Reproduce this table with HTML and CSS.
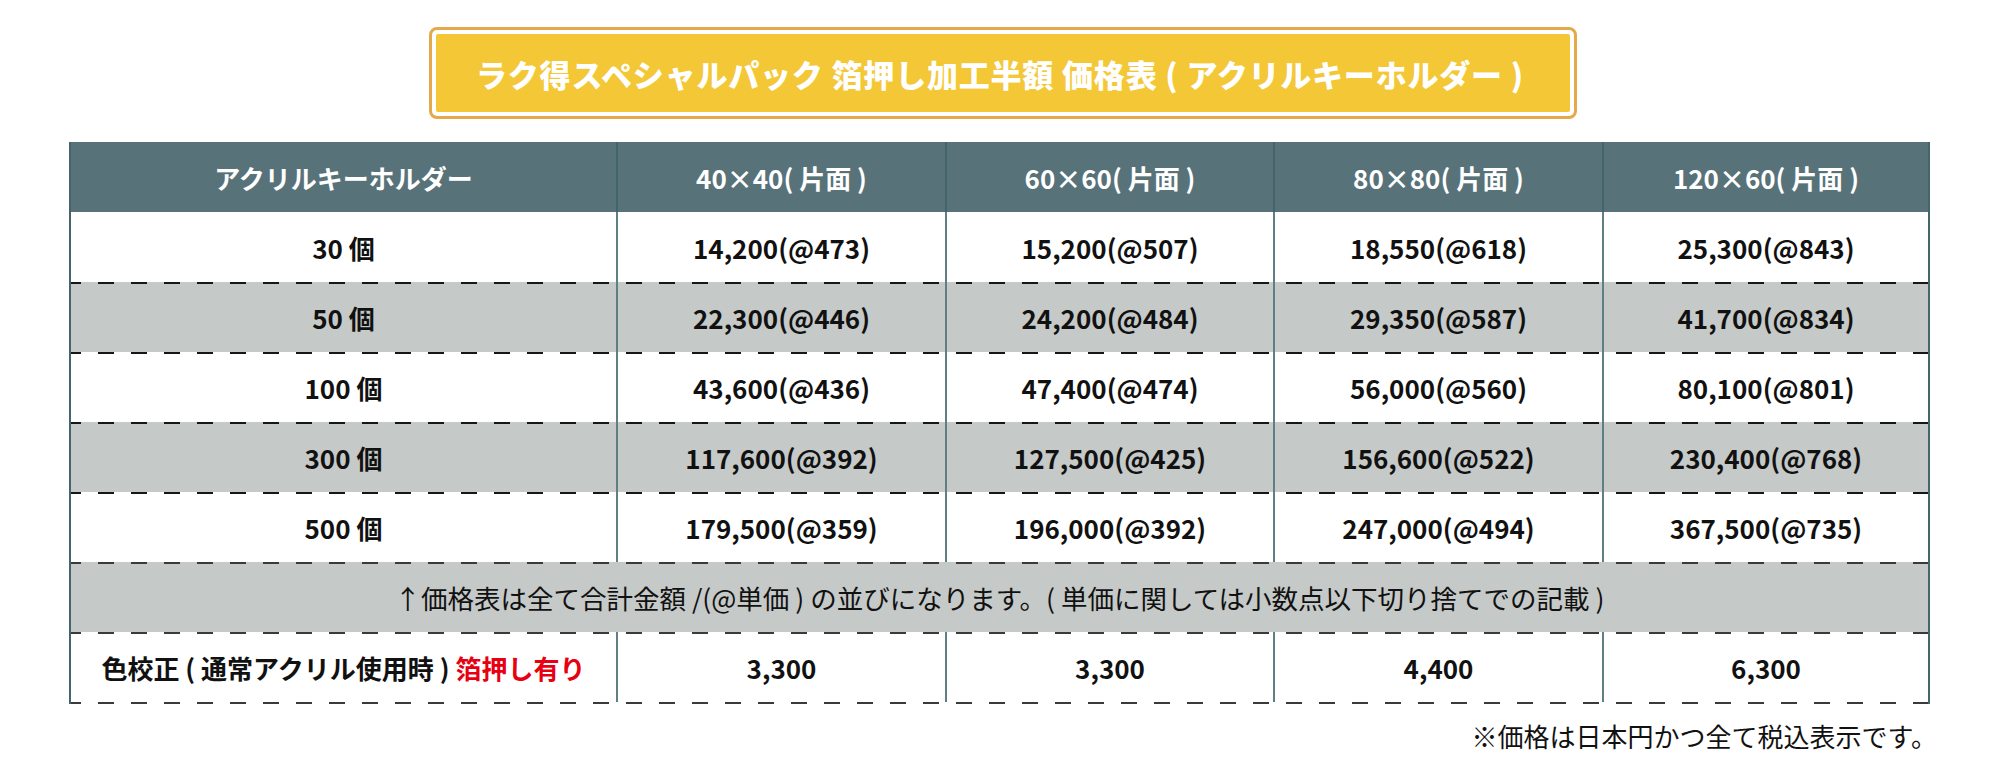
FILE: index.html
```html
<!DOCTYPE html>
<html lang="ja">
<head>
<meta charset="utf-8">
<title>ラク得スペシャルパック 価格表</title>
<link rel="stylesheet" href="styles.css">
</head>
<body>
<div class="page">
  <div class="title">
    <div class="title-inner">ラク得スペシャルパック 箔押し加工半額 価格表 ( アクリルキーホルダー )</div>
  </div>
  <div class="table">
    <div class="row head">
      <div class="cell">アクリルキーホルダー</div>
      <div class="cell">40×40( 片面 )</div>
      <div class="cell">60×60( 片面 )</div>
      <div class="cell">80×80( 片面 )</div>
      <div class="cell">120×60( 片面 )</div>
    </div>
    <div class="row">
      <div class="cell">30 個</div>
      <div class="cell">14,200(@473)</div>
      <div class="cell">15,200(@507)</div>
      <div class="cell">18,550(@618)</div>
      <div class="cell">25,300(@843)</div>
    </div>
    <div class="row gray dash">
      <div class="cell">50 個</div>
      <div class="cell">22,300(@446)</div>
      <div class="cell">24,200(@484)</div>
      <div class="cell">29,350(@587)</div>
      <div class="cell">41,700(@834)</div>
    </div>
    <div class="row dash">
      <div class="cell">100 個</div>
      <div class="cell">43,600(@436)</div>
      <div class="cell">47,400(@474)</div>
      <div class="cell">56,000(@560)</div>
      <div class="cell">80,100(@801)</div>
    </div>
    <div class="row gray dash">
      <div class="cell">300 個</div>
      <div class="cell">117,600(@392)</div>
      <div class="cell">127,500(@425)</div>
      <div class="cell">156,600(@522)</div>
      <div class="cell">230,400(@768)</div>
    </div>
    <div class="row dash">
      <div class="cell">500 個</div>
      <div class="cell">179,500(@359)</div>
      <div class="cell">196,000(@392)</div>
      <div class="cell">247,000(@494)</div>
      <div class="cell">367,500(@735)</div>
    </div>
    <div class="row gray dash dark note">
      <div class="cell">↑価格表は全て合計金額 /(@単価 ) の並びになります。( 単価に関しては小数点以下切り捨てでの記載 )</div>
    </div>
    <div class="row dash dark last">
      <div class="cell">色校正 ( 通常アクリル使用時 ) <span class="red">箔押し有り</span></div>
      <div class="cell">3,300</div>
      <div class="cell">3,300</div>
      <div class="cell">4,400</div>
      <div class="cell">6,300</div>
    </div>
  </div>
  <p class="footnote">※価格は日本円かつ全て税込表示です。</p>
</div>
</body>
</html>
```

FILE: styles.css
```css
body {
  margin: 0;
  background: #ffffff;
  font-family: "Noto Sans CJK JP", "Noto Sans", sans-serif;
  color: #111111;
}

.page {
  width: 2000px;
  padding-top: 27px;
}

.title {
  margin-left: 429px;
  width: 1148px;
  height: 92px;
  box-sizing: border-box;
  border: 3px solid #e5a84a;
  border-radius: 8px;
  padding: 4px;
  background: #ffffff;
}

.title-inner {
  height: 100%;
  background: #f4c736;
  border-radius: 2px;
  display: flex;
  align-items: center;
  justify-content: center;
  color: #ffffff;
  font-weight: 900;
  font-size: 31px;
  letter-spacing: 0.8px;
  padding-right: 6px;
  box-sizing: border-box;
}

.table {
  margin: 23px 0 0 69px;
  width: 1861px;
  box-sizing: border-box;
  border-left: 2px solid #44656b;
  border-right: 2px solid #44656b;
}

.row {
  display: grid;
  grid-template-columns: 545px 329px 328px 329px 326px;
  height: 70px;
  font-weight: 700;
  font-size: 26px;
}

.cell {
  display: flex;
  align-items: center;
  justify-content: center;
  box-sizing: border-box;
  white-space: nowrap;
}

.cell + .cell {
  border-left: 2px solid #5f7f85;
}

.head {
  background: #587279;
  color: #ffffff;
}

.head .cell + .cell {
  border-left-color: #42646a;
}

.gray {
  background-color: #c5c9c8;
}

.dash {
  background-image: repeating-linear-gradient(to right, #161616 0 10px, transparent 10px 27px, #161616 27px 33px);
  background-size: 100% 2px;
  background-repeat: no-repeat;
  background-position: 0 0;
}

.dark {
  background-image: repeating-linear-gradient(to right, #3a3a3a 0 10px, transparent 10px 27px, #3a3a3a 27px 33px);
}

.last {
  height: 72px;
  padding-bottom: 2px;
  box-sizing: border-box;
  background-image:
    repeating-linear-gradient(to right, #3a3a3a 0 10px, transparent 10px 27px, #3a3a3a 27px 33px),
    repeating-linear-gradient(to right, #3a3a3a 0 10px, transparent 10px 27px, #3a3a3a 27px 33px);
  background-position: 0 0, 0 100%;
}

.note .cell {
  grid-column: 1 / -1;
  font-weight: 400;
  font-size: 26.5px;
}

.red {
  color: #e60012;
  margin-left: 6px;
}

.footnote {
  margin: 17px 0 0;
  width: 1937px;
  text-align: right;
  font-size: 26px;
  line-height: 30px;
}
```
